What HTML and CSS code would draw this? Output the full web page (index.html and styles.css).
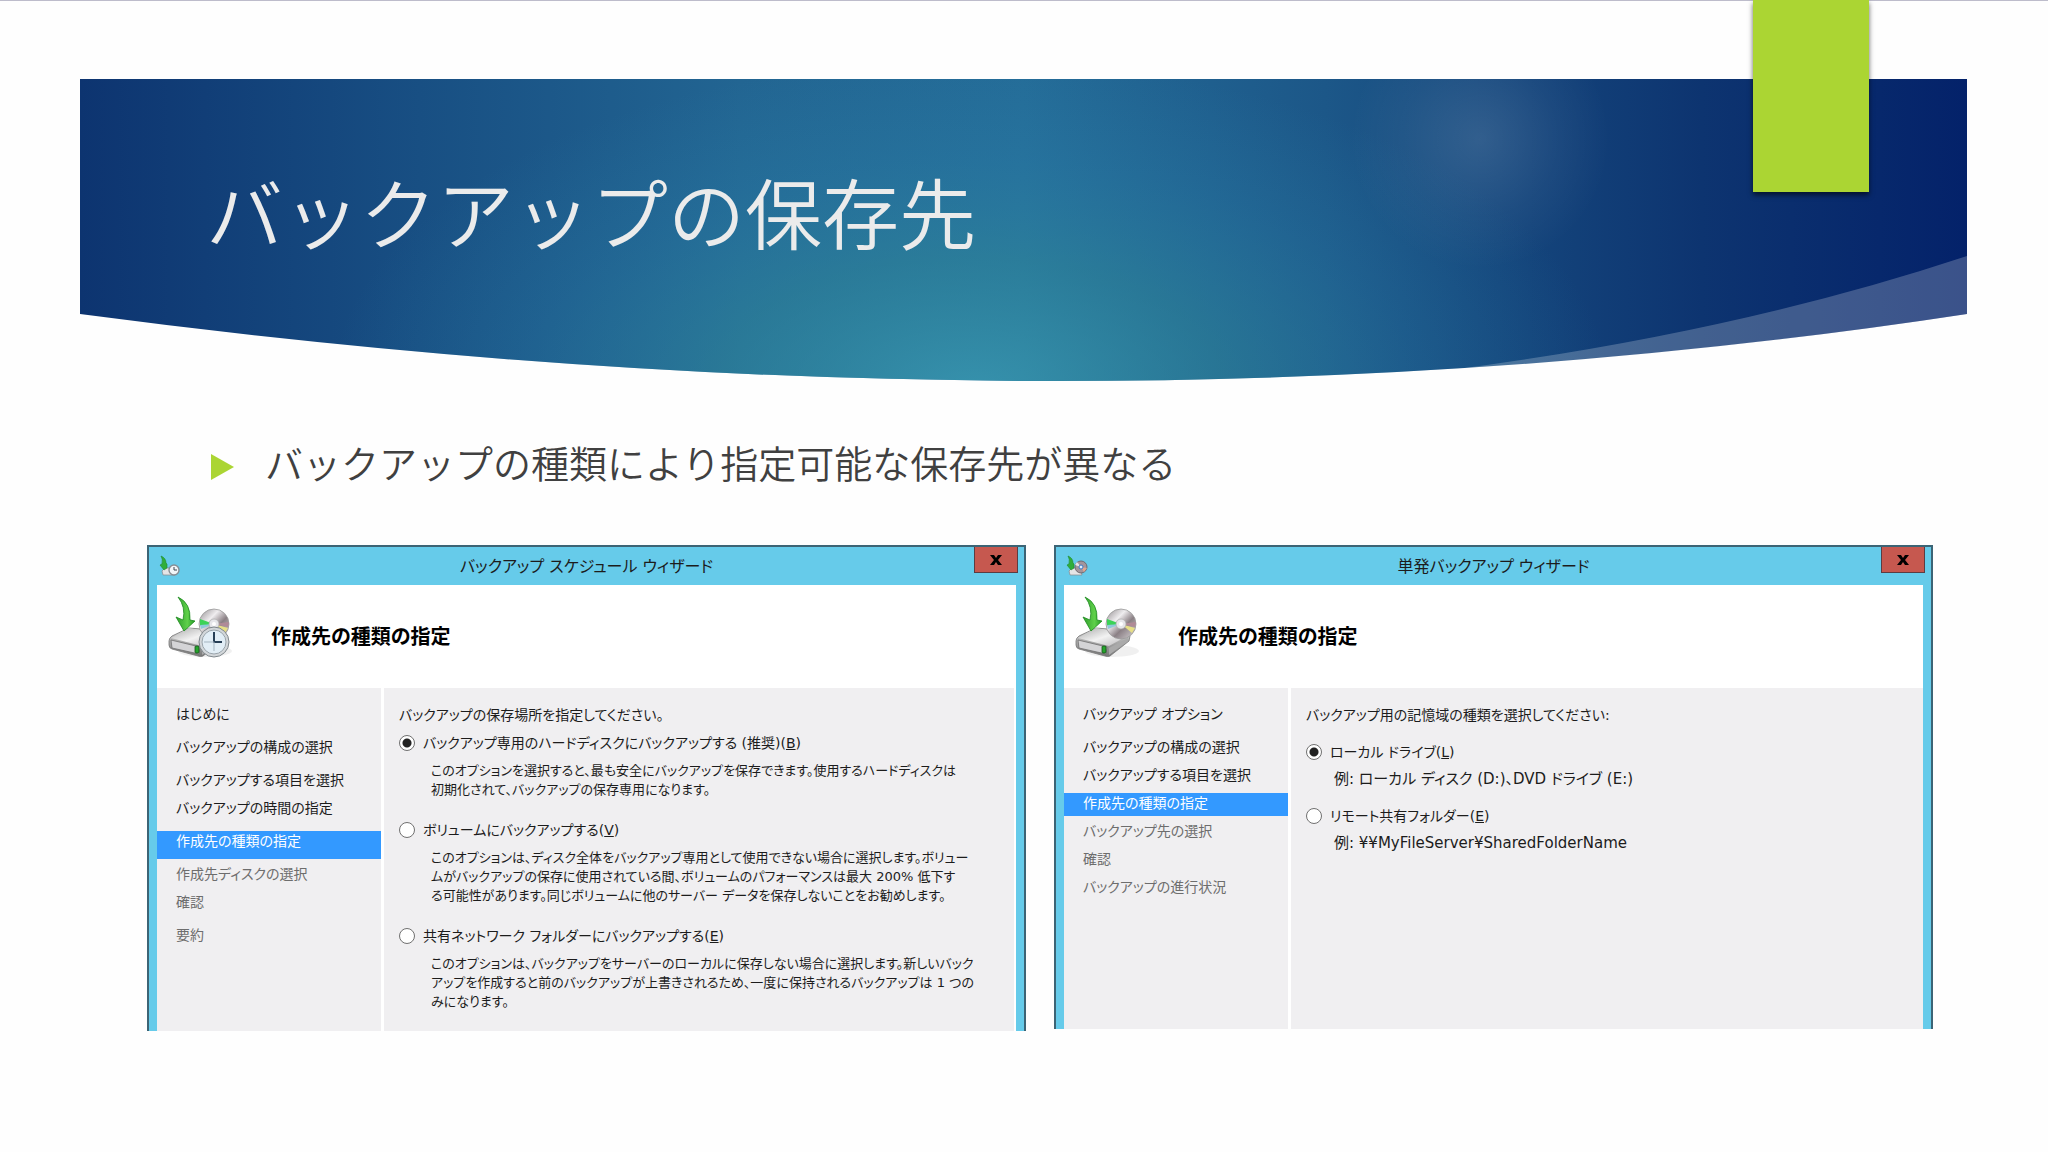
FILE: index.html
```
<!DOCTYPE html>
<html lang="ja">
<head>
  <meta charset="UTF-8">
  <title>バックアップの保存先</title>
  <link rel="stylesheet" href="styles.css">
</head>
<body>
  <!-- shared icon parts -->
  <svg class="defs" aria-hidden="true">
    <defs>
      <linearGradient id="green" x1="0" y1="0" x2="1" y2="0">
        <stop offset="0" stop-color="#2f9e2b"/>
        <stop offset="0.6" stop-color="#5fd04a"/>
        <stop offset="1" stop-color="#249a24"/>
      </linearGradient>
      <linearGradient id="metal" x1="0" y1="0" x2="1" y2="1">
        <stop offset="0" stop-color="#a9a9a9"/>
        <stop offset="0.5" stop-color="#f2f2f2"/>
        <stop offset="1" stop-color="#b5b3b5"/>
      </linearGradient>
      <linearGradient id="front" x1="0" y1="0" x2="0" y2="1">
        <stop offset="0" stop-color="#dcdcdc"/>
        <stop offset="1" stop-color="#777"/>
      </linearGradient>
      <linearGradient id="disc" x1="0" y1="0" x2="1" y2="1">
        <stop offset="0" stop-color="#8f8a8d"/>
        <stop offset="0.35" stop-color="#efedef"/>
        <stop offset="0.6" stop-color="#8b8085"/>
        <stop offset="1" stop-color="#dad7d9"/>
      </linearGradient>
      <symbol id="drive" viewBox="0 0 66 64">
        <ellipse cx="38" cy="55" rx="27" ry="6" fill="#000" opacity="0.06"/>
        <path d="M2 45 Q2 42 5 40 L22 32 L46 34 L56 40 L55 45 L36 60 Q34 61 31 60 L5 53 Q2 52 2 49 Z" fill="url(#front)" stroke="#777" stroke-width="0.8"/>
        <path d="M4 42 L22 32 L55 39 L35 50 Z" fill="url(#metal)"/>
        <path d="M4 44 L33 51 L32 58 L5 52 Z" fill="#d4d4d6" stroke="#666" stroke-width="0.7"/>
        <path d="M35 52 L54 42 L54 45 L35 59 Z" fill="#aaa"/>
        <rect x="28" y="50" width="4" height="7" rx="1" fill="#25a52c" stroke="#164f1b" stroke-width="0.8"/>
      </symbol>
      <symbol id="cd" viewBox="0 0 66 64">
        <circle cx="47" cy="28" r="15" fill="url(#disc)" stroke="#999" stroke-width="0.8"/>
        <path d="M47 28 L33 23 L33 30 Z" fill="#3bd357"/>
        <path d="M47 28 L33 29 L34 33 Z" fill="#8fc9d8"/>
        <path d="M47 28 L61 32 L58 37 Z" fill="#e7df87"/>
        <path d="M47 28 L62 26 L61 31 Z" fill="#b08a97"/>
        <circle cx="47" cy="28" r="5" fill="#e6e6ea" stroke="#aaa" stroke-width="0.7"/>
        <circle cx="47" cy="28" r="2" fill="#fff"/>
      </symbol>
      <symbol id="arrow" viewBox="0 0 66 64">
        <path d="M11 1 Q24 7 23 24 L28 25 L17 35 L9 21 L16 24 Q19 11 11 1 Z" fill="url(#green)" stroke="#1d8a20" stroke-width="0.8"/>
      </symbol>
      <symbol id="clock" viewBox="0 0 66 64">
        <circle cx="47" cy="46" r="15" fill="#d3d7da" stroke="#7f878c" stroke-width="1"/>
        <circle cx="47" cy="46" r="12" fill="#e2eef6" stroke="#9aa4ab" stroke-width="1"/>
        <path d="M47 36 V46 H55" fill="none" stroke="#273f56" stroke-width="2"/>
        <path d="M47 46 V55 M47 46 H37" stroke="#a5b5c1" stroke-width="1"/>
      </symbol>
      <!-- title bar sizes -->
      <symbol id="mini-base" viewBox="0 0 22 22">
        <path d="M3 16 L6 13 H14 L16 20 H4 Z" fill="#e4e4e6" stroke="#8a8f94" stroke-width="0.8"/>
        <path d="M2 1 Q7 3 7 8 L8 9 V13 L5 15 L1 10 L3 9 Q4 4 2 1 Z" fill="#2fae3a" stroke="#1c8a2a" stroke-width="0.6"/>
      </symbol>
      <symbol id="mini-clock" viewBox="0 0 22 22">
        <circle cx="15" cy="15" r="5" fill="#f1f5f8" stroke="#858d94" stroke-width="1.4"/>
        <path d="M15 12 V15 H18" fill="none" stroke="#3a4650" stroke-width="1"/>
      </symbol>
      <symbol id="mini-cd" viewBox="0 0 22 22">
        <circle cx="15" cy="12" r="6" fill="#a3959c" stroke="#6f6a70" stroke-width="1"/>
        <path d="M15 12 L9 10 L11 7 Z" fill="#e8e4e6"/>
        <path d="M15 12 L21 13 L18 17 Z" fill="#e0a68f"/>
        <circle cx="15" cy="12" r="2" fill="#dff0ff" stroke="#3b78c4" stroke-width="1"/>
      </symbol>
    </defs>
  </svg>

  <main class="slide">
    <div class="tag"></div>

    <header class="banner">
      <svg class="banner-bg" viewBox="0 0 1887 302" preserveAspectRatio="none" aria-hidden="true">
        <defs>
          <linearGradient id="sea">
            <stop offset="0" stop-color="#0d3470"/>
            <stop offset="0.18" stop-color="#184f83"/>
            <stop offset="0.35" stop-color="#226592"/>
            <stop offset="0.5" stop-color="#246c98"/>
            <stop offset="0.66" stop-color="#1c5788"/>
            <stop offset="0.86" stop-color="#0d3470"/>
            <stop offset="1" stop-color="#04226a"/>
          </linearGradient>
          <radialGradient id="shallow" gradientUnits="userSpaceOnUse" cx="0" cy="0" r="1" gradientTransform="translate(890 310) scale(640 330)">
            <stop offset="0" stop-color="#3ea2b6" stop-opacity="0.7"/>
            <stop offset="0.4" stop-color="#34949f" stop-opacity="0.42"/>
            <stop offset="0.7" stop-color="#2f8cb0" stop-opacity="0.2"/>
            <stop offset="1" stop-color="#2f8cb0" stop-opacity="0"/>
          </radialGradient>
          <radialGradient id="glow">
            <stop offset="0" stop-color="#fff" stop-opacity="0.12"/>
            <stop offset="0.6" stop-color="#fff" stop-opacity="0.04"/>
            <stop offset="1" stop-color="#fff" stop-opacity="0"/>
          </radialGradient>
        </defs>
        <path d="M0 0 H1887 V235 Q1010 369 0 235 Z" fill="url(#sea)"/>
        <path d="M0 0 H1887 V235 Q1010 369 0 235 Z" fill="url(#shallow)"/>
        <circle cx="1400" cy="60" r="130" fill="url(#glow)"/>
        <path d="M1887 177 Q1655 254 1370 291 Q1640 273 1887 235 Z" fill="#fff" opacity="0.22"/>
      </svg>
      <h1>バックアップの保存先</h1>
    </header>

    <ul class="points">
      <li>バックアップの種類により指定可能な保存先が異なる</li>
    </ul>

    <div class="dialogs">
      <section class="dialog">
        <div class="titlebar">
          <svg class="small-icon" viewBox="0 0 22 22" aria-hidden="true">
            <use href="#mini-base"/><use href="#mini-clock"/>
          </svg>
          <span>バックアップ スケジュール ウィザード</span>
          <button class="close" aria-label="閉じる"><svg viewBox="0 0 12 12"><path d="M0 1h4l2 3 2-3h4L8 6l4 5H8L6 8l-2 3H0l4-5z"/></svg></button>
        </div>
        <div class="dialog-head">
          <svg class="big-icon" viewBox="0 0 66 64" aria-hidden="true">
            <use href="#drive"/><use href="#cd"/><use href="#arrow"/><use href="#clock"/>
          </svg>
          <h2>作成先の種類の指定</h2>
        </div>
        <div class="dialog-body">
          <ol class="steps">
            <li class="tall">はじめに</li>
            <li class="tall">バックアップの構成の選択</li>
            <li>バックアップする項目を選択</li>
            <li class="tall">バックアップの時間の指定</li>
            <li class="tall current">作成先の種類の指定</li>
            <li class="todo">作成先ディスクの選択</li>
            <li class="tall todo">確認</li>
            <li class="todo">要約</li>
          </ol>
          <form class="options">
            <p class="intro">バックアップの保存場所を指定してください。</p>
            <div class="option">
              <input type="radio" name="dest" id="dest-disk" checked>
              <label for="dest-disk">バックアップ専用のハードディスクにバックアップする (推奨)(<u>B</u>)</label>
              <p>このオプションを選択すると、最も安全にバックアップを保存できます。使用するハードディスクは<br>初期化されて、バックアップの保存専用になります。</p>
            </div>
            <div class="option">
              <input type="radio" name="dest" id="dest-volume">
              <label for="dest-volume">ボリュームにバックアップする(<u>V</u>)</label>
              <p>このオプションは、ディスク全体をバックアップ専用として使用できない場合に選択します。ボリュー<br>ムがバックアップの保存に使用されている間、ボリュームのパフォーマンスは最大 200% 低下す<br>る可能性があります。同じボリュームに他のサーバー データを保存しないことをお勧めします。</p>
            </div>
            <div class="option">
              <input type="radio" name="dest" id="dest-network">
              <label for="dest-network">共有ネットワーク フォルダーにバックアップする(<u>E</u>)</label>
              <p>このオプションは、バックアップをサーバーのローカルに保存しない場合に選択します。新しいバック<br>アップを作成すると前のバックアップが上書きされるため、一度に保持されるバックアップは 1 つの<br>みになります。</p>
            </div>
          </form>
        </div>
      </section>

      <section class="dialog">
        <div class="titlebar">
          <svg class="small-icon" viewBox="0 0 22 22" aria-hidden="true">
            <use href="#mini-base"/><use href="#mini-cd"/>
          </svg>
          <span>単発バックアップ ウィザード</span>
          <button class="close" aria-label="閉じる"><svg viewBox="0 0 12 12"><path d="M0 1h4l2 3 2-3h4L8 6l4 5H8L6 8l-2 3H0l4-5z"/></svg></button>
        </div>
        <div class="dialog-head">
          <svg class="big-icon" viewBox="0 0 66 64" aria-hidden="true">
            <use href="#drive"/><use href="#cd"/><use href="#arrow"/>
          </svg>
          <h2>作成先の種類の指定</h2>
        </div>
        <div class="dialog-body">
          <ol class="steps">
            <li class="tall">バックアップ オプション</li>
            <li>バックアップの構成の選択</li>
            <li>バックアップする項目を選択</li>
            <li class="current">作成先の種類の指定</li>
            <li class="todo">バックアップ先の選択</li>
            <li class="todo">確認</li>
            <li class="todo">バックアップの進行状況</li>
          </ol>
          <form class="options once">
            <p class="intro">バックアップ用の記憶域の種類を選択してください:</p>
            <div class="option">
              <input type="radio" name="drive" id="drive-local" checked>
              <label for="drive-local">ローカル ドライブ(<u>L</u>)</label>
              <p>例: ローカル ディスク (D:)、DVD ドライブ (E:)</p>
            </div>
            <div class="option">
              <input type="radio" name="drive" id="drive-remote">
              <label for="drive-remote">リモート共有フォルダー(<u>E</u>)</label>
              <p>例: ¥¥MyFileServer¥SharedFolderName</p>
            </div>
          </form>
        </div>
      </section>
    </div>
  </main>
</body>
</html>
```

FILE: styles.css
```
* {
  box-sizing: border-box;
}

body {
  margin: 0;
  background-color: #fefefe;
  color: #404040;
  font-family: "Noto Sans CJK JP", sans-serif;
}

h1, h2, p, ul, ol {
  margin: 0;
  padding: 0;
  font-weight: normal;
}

ul, ol {
  list-style: none;
}

.defs {
  position: absolute;
  width: 0;
  height: 0;
}

.slide {
  position: relative;
  border-top: 1px solid #bdbccb;
  padding-top: 78px;
}

/* green bookmark over the banner */
.tag {
  position: absolute;
  z-index: 1;
  top: -1px;
  right: 179px;
  width: 116px;
  height: 192px;
  background-color: #abd533;
  box-shadow: 0 3px 5px rgba(0, 0, 0, 0.6);
}

.banner {
  position: relative;
  height: 302px;
  margin: 0 81px 0 80px;
  padding: 76px 126px 0;
}

.banner-bg {
  position: absolute;
  top: 0;
  left: 0;
  width: 100%;
  height: 100%;
}

.banner h1 {
  position: relative;
  color: #ebebeb;
  font-size: 77px;
  font-weight: 350;
  line-height: 112px;
}

.points {
  padding: 53px 211px 0;
}

.points li {
  display: flex;
  align-items: center;
  gap: 31px;
  font-size: 38px;
  font-weight: 350;
  line-height: 56px;
}

.points li::before {
  content: "";
  margin-top: 10px;
  border-left: 23px solid #abd533;
  border-top: 13px solid transparent;
  border-bottom: 13px solid transparent;
}

/* wizard windows */
.dialogs {
  display: grid;
  grid-template-columns: repeat(2, minmax(0, 1fr));
  align-items: start;
  gap: 28px;
  padding: 55px 115px 0 147px;
}

.dialog {
  border: 2px solid #3c6475;
  border-bottom: none;
  padding: 0 8px;
  background-color: #66cbea;
  color: #1c1c1c;
  font-family: "DejaVu Sans", "Noto Sans CJK JP", sans-serif;
  font-size: 14px;
  font-feature-settings: "palt";
  line-height: 20px;
  white-space: nowrap;
}

.titlebar {
  display: grid;
  grid-template-columns: 1fr auto 1fr;
  align-items: center;
  height: 38px;
  font-size: 16px;
}

.titlebar span {
  padding-top: 2px;
}

.small-icon {
  width: 22px;
  height: 22px;
  margin-left: 2px;
}

.close {
  justify-self: end;
  align-self: start;
  display: flex;
  align-items: center;
  justify-content: center;
  width: 44px;
  height: 26px;
  margin-right: -2px;
  border: 1px solid #5c3c42;
  border-top: none;
  padding: 0;
  background-color: #c6584f;
}

.close svg {
  width: 12px;
  height: 12px;
}

.dialog-head {
  display: flex;
  align-items: center;
  gap: 38px;
  height: 103px;
  padding: 0 10px;
  background-color: #fff;
}

.big-icon {
  width: 66px;
  height: 64px;
  margin-bottom: 18px;
}

.dialog-head h2 {
  color: #000;
  font-size: 20px;
  font-weight: bold;
}

.dialog-body {
  display: grid;
  grid-template-columns: 224px minmax(0, 1fr);
  gap: 3px;
  min-height: 341px;
  background-color: #fff;
}

.steps,
.options {
  background-color: #f0eff1;
}

.steps {
  padding-top: 16px;
}

.steps li {
  height: 23px;
  margin-bottom: 5px;
  padding-left: 19px;
}

.steps .tall {
  height: 28px;
}

.steps .current {
  background-color: #3399ff;
  color: #fff;
}

.steps .todo {
  color: #6d6d6d;
}

.options {
  margin-right: 2px;
  padding: 17px 10px 20px 15px;
}

.intro {
  margin-bottom: 8px;
}

.option {
  display: grid;
  grid-template-columns: 16px 1fr;
  align-items: center;
  column-gap: 8px;
  row-gap: 8px;
  margin-bottom: 21px;
}

.option:last-child {
  margin-bottom: 0;
}

.option p {
  grid-column: 2;
  padding-left: 8px;
  font-size: 13px;
  line-height: 19px;
}

.once {
  margin-right: 0;
}

.once .intro {
  margin-bottom: 17px;
}

.once .option {
  margin-bottom: 17px;
}

.once .option p {
  padding-left: 4px;
  font-size: 15px;
}

.option input {
  appearance: none;
  width: 16px;
  height: 16px;
  margin: 0;
  border: 1px solid #707070;
  border-radius: 50%;
  background-color: #fff;
}

.option input:checked {
  background-image: radial-gradient(circle, #222 4px, transparent 5px);
}
```
